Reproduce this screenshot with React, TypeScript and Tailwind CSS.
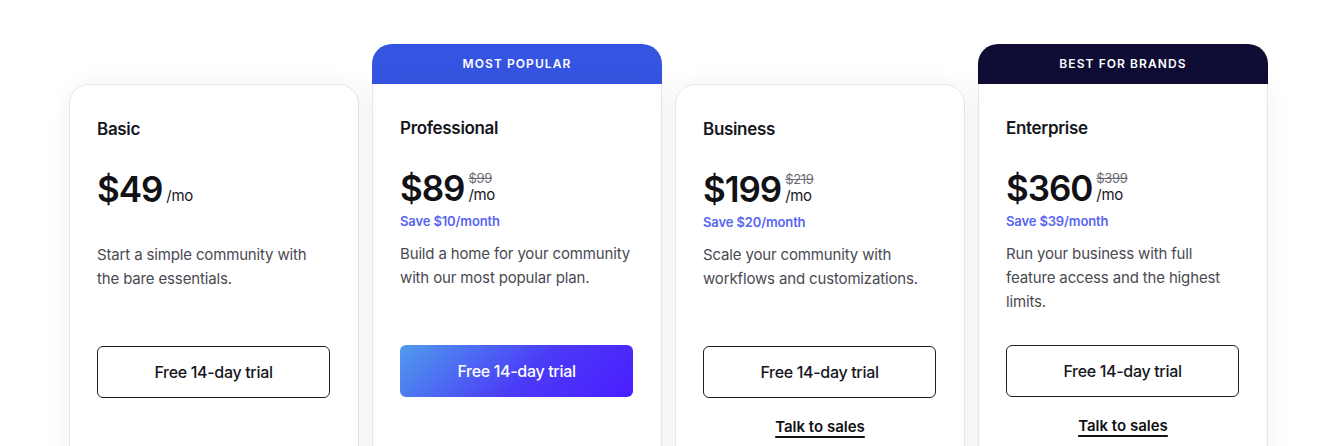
import React from "react";

type Plan = {
  name: string;
  price: string;
  old?: string;
  save?: string;
  desc: string[];
  badge?: { label: string; cls: string };
  primary?: boolean;
  sales?: boolean;
};

const plans: Plan[] = [
  {
    name: "Basic",
    price: "$49",
    desc: ["Start a simple community with", "the bare essentials."],
  },
  {
    name: "Professional",
    price: "$89",
    old: "$99",
    save: "Save $10/month",
    desc: ["Build a home for your community", "with our most popular plan."],
    badge: { label: "MOST POPULAR", cls: "bg-[#3654e2]" },
    primary: true,
  },
  {
    name: "Business",
    price: "$199",
    old: "$219",
    save: "Save $20/month",
    desc: ["Scale your community with", "workflows and customizations."],
    sales: true,
  },
  {
    name: "Enterprise",
    price: "$360",
    old: "$399",
    save: "Save $39/month",
    desc: ["Run your business with full", "feature access and the highest", "limits."],
    badge: { label: "BEST FOR BRANDS", cls: "bg-[#0f0d35]" },
    sales: true,
  },
];

function PlanCard({ plan }: { plan: Plan }) {
  return (
    <div className="flex flex-col w-[290px] shrink-0">
      {plan.badge ? (
        <div
          className={`${plan.badge.cls} h-10 rounded-t-[20px] flex items-center justify-center text-white text-[12px] font-semibold tracking-[0.09em]`}
        >
          {plan.badge.label}
        </div>
      ) : (
        <div className="h-10" />
      )}
      <div
        className={`bg-white border border-[#e6e6e6] shadow-[0_0_24px_rgba(0,0,0,0.06)] h-[420px] px-[27px] pt-[33px] tracking-[-0.02em] ${
          plan.badge ? "border-t-0" : "rounded-t-[20px]"
        }`}
      >
        <div className="text-[17px] font-semibold text-[#16161d] leading-[22px]">{plan.name}</div>
        <div className="mt-[26px] flex items-end h-[46px]">
          <span className="text-[35px] font-semibold text-[#111116] leading-[46px] tracking-[-0.03em]">
            {plan.price}
          </span>
          <div className="ml-[4px] flex flex-col pb-[7px]">
            {plan.old && (
              <span className="text-[13px] text-[#6b6b73] line-through leading-[16px]">{plan.old}</span>
            )}
            <span className="text-[15px] text-[#16161d] leading-[18px]">/mo</span>
          </div>
        </div>
        <div className="h-[22px] text-[13px] font-semibold text-[#5865f2] leading-[20px] tracking-[-0.01em]">
          {plan.save}
        </div>
        <p className="mt-[9px] text-[15px] leading-[24px] text-[#4a4a52] h-[80px] tracking-[-0.01em]">
          {plan.desc.map((line, i) => (
            <React.Fragment key={i}>
              {i > 0 && <br />}
              {line}
            </React.Fragment>
          ))}
        </p>
        <button
          className={`mt-[23px] w-[233px] h-[52px] rounded-[6px] text-[16px] font-medium ${
            plan.primary
              ? "bg-[linear-gradient(135deg,#4f9cec_0%,#4b3cf7_55%,#4a1cff_100%)] text-white"
              : "border border-[#1e1e2a] text-[#16161d] bg-white"
          }`}
        >
          Free 14-day trial
        </button>
        {plan.sales && (
          <div className="mt-[16px] text-center">
            <span className="text-[15px] font-semibold text-[#111116] underline underline-offset-[4px] decoration-[1.5px] tracking-normal">
              Talk to sales
            </span>
          </div>
        )}
      </div>
    </div>
  );
}

export default function App() {
  return (
    <div
      className="w-[1330px] h-[446px] overflow-hidden bg-white"
      style={{ fontFamily: "Inter, 'Noto Sans', sans-serif" }}
    >
      <div className="flex gap-[13px] pl-[69px] pt-[44px]">
        {plans.map((p) => (
          <PlanCard key={p.name} plan={p} />
        ))}
      </div>
    </div>
  );
}
